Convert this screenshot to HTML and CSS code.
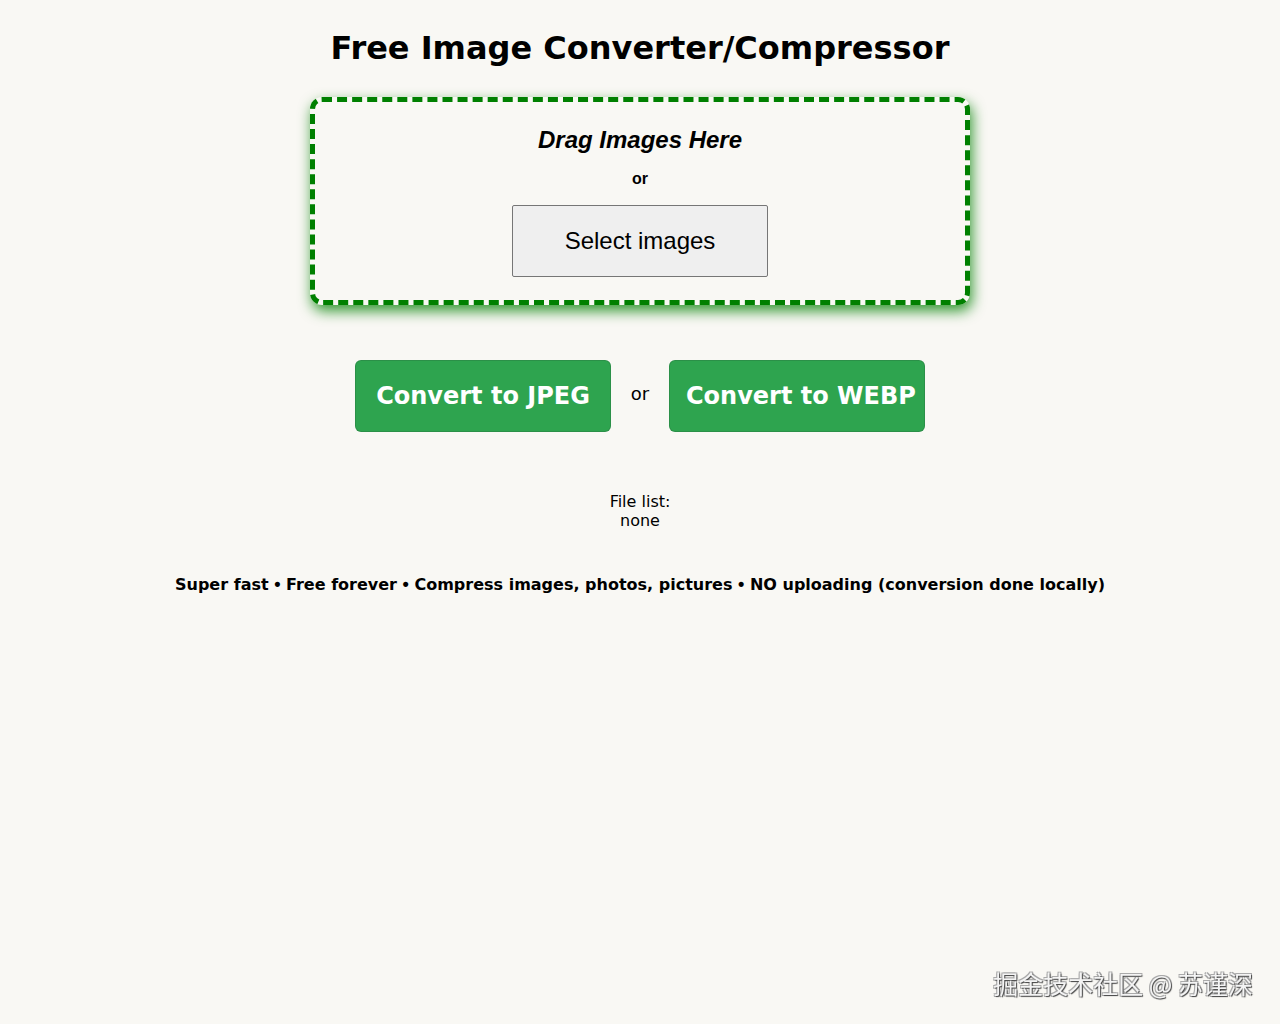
FILE: index.html
```html
<!DOCTYPE html>
<html lang="en">
<head>
<meta charset="utf-8">
<title>Free Image Converter/Compressor</title>
<link rel="stylesheet" href="styles.css">
</head>
<body>
<main class="page">
  <h1 class="title">Free Image Converter/Compressor</h1>
  <section class="dropzone">
    <h2 class="drop-title">Drag Images Here</h2>
    <p class="drop-or">or</p>
    <button class="select-btn" type="button">Select images</button>
  </section>
  <div class="actions">
    <button class="convert-btn" type="button">Convert to JPEG</button>
    <span class="actions-or">or</span>
    <button class="convert-btn" type="button">Convert to WEBP</button>
  </div>
  <div class="file-list">
    <div>File list:</div>
    <div>none</div>
  </div>
  <p class="features">Super fast <span class="dot">•</span> Free forever <span class="dot">•</span> Compress images, photos, pictures <span class="dot">•</span> NO uploading (conversion done locally)</p>
</main>
<div class="watermark">掘金技术社区 @ 苏谨深</div>
</body>
</html>
```

FILE: styles.css
```css
html, body {
  margin: 0;
  padding: 0;
  background: #f9f8f4;
}
body {
  font-family: "DejaVu Sans", sans-serif;
  color: #000;
  min-height: 1024px;
}
.page {
  display: flex;
  flex-direction: column;
  align-items: center;
  padding-top: 27px;
}
.title {
  margin: 0;
  font-size: 32px;
  font-weight: bold;
  line-height: 42px;
}
.dropzone {
  margin-top: 28px;
  width: 660px;
  height: 208px;
  box-sizing: border-box;
  border: 5px dashed #008000;
  border-radius: 12px;
  box-shadow: 2px 6px 14px rgba(0, 128, 0, 0.8);
  display: flex;
  flex-direction: column;
  align-items: center;
  padding-top: 22px;
}
.drop-title {
  margin: 0;
  font-family: "Liberation Sans", Arial, sans-serif;
  font-style: italic;
  font-weight: bold;
  font-size: 24px;
  line-height: 32px;
}
.drop-or {
  margin: 14px 0 0;
  font-family: "Liberation Sans", Arial, sans-serif;
  font-weight: bold;
  font-size: 16px;
  line-height: 18px;
}
.select-btn {
  margin-top: 17px;
  width: 256px;
  height: 72px;
  background: #efefef;
  border: 1px solid #767676;
  border-radius: 2px;
  font-family: "Liberation Sans", Arial, sans-serif;
  font-size: 24px;
  color: #000;
}
.actions {
  margin-top: 55px;
  display: flex;
  align-items: center;
}
.actions-or {
  width: 58px;
  text-align: center;
  font-size: 18px;
  padding-bottom: 6px;
}
.convert-btn {
  width: 256px;
  height: 72px;
  background: #2ea44f;
  border: 1px solid rgba(27, 31, 35, 0.15);
  border-radius: 6px;
  color: #fff;
  font-family: "DejaVu Sans", sans-serif;
  font-weight: bold;
  font-size: 24px;
  padding: 0 16px;
  white-space: nowrap;
  text-align: center;
}
.file-list {
  margin-top: 60px;
  text-align: center;
  font-size: 16px;
  line-height: 19px;
}
.features {
  margin: 45px 0 0;
  font-weight: bold;
  font-size: 16px;
  line-height: 20px;
  text-align: center;
}
.dot {
  font-family: "Liberation Sans", Arial, sans-serif;
  font-size: 18px;
  line-height: 1;
}
.watermark {
  position: fixed;
  right: 27px;
  bottom: 25px;
  font-family: "Noto Sans CJK SC", sans-serif;
  font-size: 25px;
  line-height: 32px;
  color: #f4f4f4;
  text-shadow: 1px 1px 1px #444, -1px -1px 0 #aaa, 1px -1px 0 #aaa, -1px 1px 0 #aaa;
}
```
